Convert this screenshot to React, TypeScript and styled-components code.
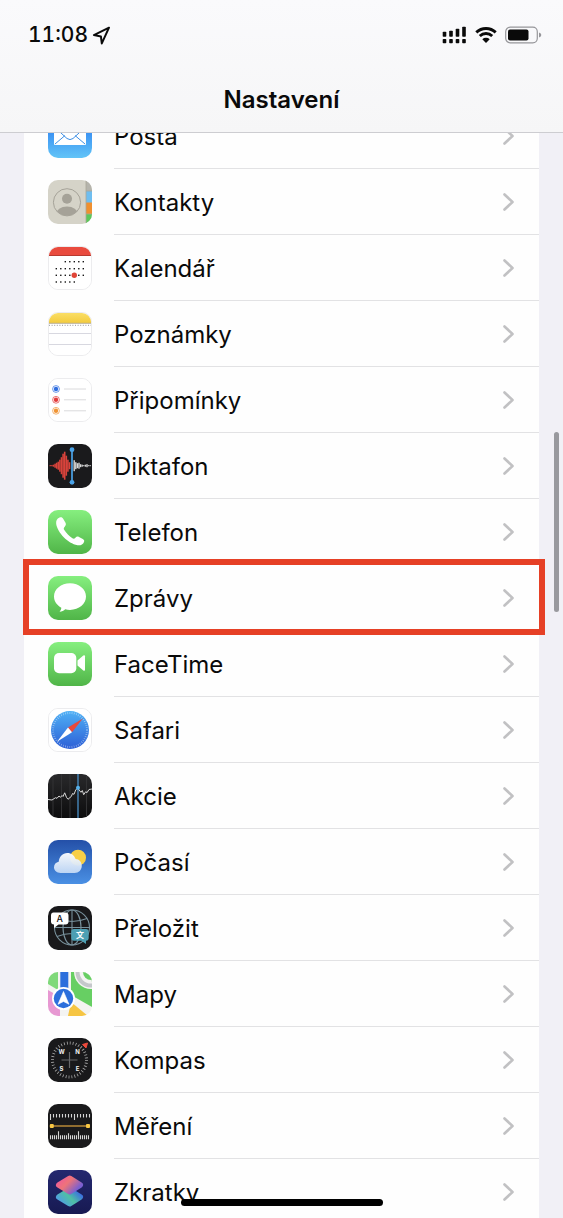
import React from "react";
import styled, { createGlobalStyle } from "styled-components";

const GlobalStyle = createGlobalStyle`
  * { box-sizing: border-box; }
  body {
    margin: 0;
    background: #f1f0f6;
    color: #0a0a0a;
    font-family: Inter, "Liberation Sans", sans-serif;
    -webkit-font-smoothing: antialiased;
  }
`;

const Screen = styled.div`
  position: relative;
  display: flex;
  flex-direction: column;
  height: 100vh;
  overflow: hidden;
`;

const Header = styled.header`
  flex: none;
  border-bottom: 1px solid #cdcdd1;
  background: linear-gradient(#fafafc, #f6f6f7);
`;

const StatusBar = styled.div`
  display: flex;
  align-items: center;
  height: 68px;
  padding: 2px 21px 0 28px;
`;

const Clock = styled.time`
  margin-right: 4px;
  font-size: 21px;
  line-height: 28px;
  font-weight: 500;
  font-variant-numeric: tabular-nums;
`;

const Indicators = styled.div`
  display: flex;
  align-items: center;
  gap: 8px;
  margin-left: auto;
`;

const Title = styled.h1`
  margin: 0;
  height: 64px;
  font-size: 24px;
  line-height: 64px;
  font-weight: 600;
  text-align: center;
`;

const Scroller = styled.main`
  flex: 1;
  min-height: 0;
  overflow: hidden;
  padding: 0 24px;
`;

const List = styled.ul`
  list-style: none;
  margin: -30px 0 0;
  padding: 0;
  background: #fefefe;
`;

const Item = styled.li`
  position: relative;
`;

const Row = styled.a`
  display: flex;
  align-items: center;
  gap: 22px;
  height: 66px;
  padding-left: 24px;
  color: inherit;
  text-decoration: none;
`;

const AppIcon = styled.span<{ $outlined?: boolean }>`
  flex: none;
  display: block;
  width: 44px;
  height: 44px;
  border: ${(p) => (p.$outlined ? "1px solid #ececee" : "none")};
  border-radius: 10px;
  overflow: hidden;
  svg {
    display: block;
    margin: ${(p) => (p.$outlined ? "-1px" : "0")};
  }
`;

const RowBody = styled.span`
  flex: 1;
  display: flex;
  align-items: center;
  justify-content: space-between;
  height: 66px;
  padding-right: 24px;
  border-bottom: 1px solid #e2e2e4;
`;

const Label = styled.span`
  padding-top: 2px;
  font-size: 24px;
  line-height: 32px;
`;

const Highlight = styled.span`
  position: absolute;
  inset: -6px -6px -4px -1px;
  z-index: 1;
  border: 6px solid #e64026;
  pointer-events: none;
`;

const ScrollThumb = styled.div`
  position: absolute;
  top: 432px;
  right: 4px;
  width: 5px;
  height: 180px;
  border-radius: 3px;
  background: #99999e;
`;

const HomeIndicator = styled.div`
  position: absolute;
  bottom: 12px;
  left: 50%;
  width: 202px;
  height: 7px;
  border-radius: 4px;
  background: #000;
  transform: translateX(-50%);
`;

const Art = ({ children }: { children: React.ReactNode }) => (
  <svg width="44" height="44" viewBox="0 0 44 44" aria-hidden="true">{children}</svg>
);

const Gradient = ({ id, from, to }: { id: string; from: string; to: string }) => (
  <linearGradient id={id} x1="0" y1="0" x2="0" y2="1">
    <stop offset="0" stopColor={from} />
    <stop offset="1" stopColor={to} />
  </linearGradient>
);

const Mail = () => (
  <Art>
    <Gradient id="mail" from="#1f6ff0" to="#62c4f7" />
    <rect width="44" height="44" fill="url(#mail)" />
    <rect x="6" y="12" width="32" height="19" rx="1" fill="#fff" />
    <path d="M7 13.500 19 24.500q3 2.200 6 0L37 13.500M7 30l10-8.500M37 30 27 21.500" fill="none" stroke="#3f8fe4" strokeWidth="1" />
  </Art>
);

const Contacts = () => (
  <Art>
    <rect width="44" height="44" fill="#d5d3c8" />
    <path d="M38 0h6v11h-6z" fill="#b5b4ac" />
    <path d="M38 11h6v11.500h-6z" fill="#6fbef0" />
    <path d="M38 22.500h6v11.500h-6z" fill="#f0902f" />
    <path d="M38 34h6v10h-6z" fill="#5cc85a" />
    <path d="M38 0v44M38 11h6M38 22.500h6M38 34h6" stroke="#aaa698" strokeWidth=".8" />
    <clipPath id="person"><circle cx="19" cy="22.300" r="13.500" /></clipPath>
    <g clipPath="url(#person)" fill="#a5a298">
      <circle cx="19" cy="18.700" r="5" />
      <ellipse cx="19" cy="34" rx="11" ry="7.500" />
    </g>
    <circle cx="19" cy="22.300" r="13.600" fill="none" stroke="#a5a298" strokeWidth="1" />
  </Art>
);

const dotColumns = [8.3, 12.8, 17.3, 21.8, 26.3, 30.8, 35.3];
const dotRows = [
  { y: 15.7, from: 2, to: 6 },
  { y: 22.7, from: 0, to: 6 },
  { y: 29.3, from: 0, to: 6 },
  { y: 36, from: 0, to: 4 },
];

const Calendar = () => (
  <Art>
    <rect width="44" height="44" fill="#fff" />
    <rect width="44" height="9.500" fill="#e94b3e" />
    <path d="M0 9.500h44" stroke="#b83a30" strokeWidth="1" />
    {dotRows.map((row) =>
      dotColumns.slice(row.from, row.to + 1).map((x) => (
        <rect key={`${x}-${row.y}`} x={x - 0.7} y={row.y - 0.7} width="1.4" height="1.4" fill="#151515" />
      ))
    )}
    <circle cx="26.300" cy="29.300" r="2.700" fill="#e04538" />
  </Art>
);

const Notes = () => (
  <Art>
    <Gradient id="notes" from="#fbe06a" to="#f3cb3d" />
    <rect width="44" height="44" fill="#fff" />
    <rect width="44" height="11" fill="url(#notes)" />
    <path d="M0 11.300h44" stroke="#b9ad8c" strokeWidth="1" />
    <path d="M1 13.300h43" stroke="#aaa" strokeWidth="1.200" strokeDasharray="1 1.600" />
    <path d="M0 21.500h44M0 32.500h44" stroke="#d8d8e0" strokeWidth="1" />
  </Art>
);

const Reminders = () => (
  <Art>
    <rect width="44" height="44" fill="#fff" />
    {[["#2f6ee0", 11], ["#e23b3b", 21.8], ["#f09435", 32.8]].map(([color, y]) => (
      <g key={y}>
        <circle cx="8" cy={y} r="3.400" fill="none" stroke={color as string} strokeWidth="1" opacity=".7" />
        <circle cx="8" cy={y} r="2.200" fill={color as string} />
        <path d={`M16 ${y}h22`} stroke="#dadadc" strokeWidth="1" />
      </g>
    ))}
  </Art>
);

const redBars = [1, 1, 2, 4, 6, 8, 12, 17, 24, 28, 20, 12, 7];
const whiteBars = [11, 7, 5, 6, 3, 2, 1, 2, 3, 1, 1];

const VoiceMemos = () => (
  <Art>
    <rect width="44" height="44" fill="#1a1a1c" />
    {redBars.map((h, i) => (
      <rect key={i} x={1.500 + i * 1.600} y={21.700 - h / 2} width="1.600" height={h} fill="#d8433b" />
    ))}
    {whiteBars.map((h, i) => (
      <rect key={i} x={25.500 + i * 1.600} y={21.700 - h / 2} width="1.400" height={h} fill="#d8d8d8" />
    ))}
    <path d="M24 5.500v33" stroke="#4aa3e8" strokeWidth="1.700" />
    <circle cx="24" cy="5.700" r="2.400" fill="#4aa3e8" />
    <circle cx="24" cy="38.300" r="2.400" fill="#4aa3e8" />
  </Art>
);

const GreenTile = ({ id }: { id: string }) => (
  <>
    <Gradient id={id} from="#86ef7f" to="#50b548" />
    <rect width="44" height="44" fill={`url(#${id})`} />
  </>
);

const Phone = () => (
  <Art>
    <GreenTile id="phone" />
    <path
      d="M11.500 7.500C13.300 6.800 14.400 7.300 15.300 8.900L17.500 12.800C18.200 14.300 17.900 15.500 16.900 16.400C15.600 17.600 15.500 18.700 16.300 20C18.300 23.200 21.200 26.200 24.400 28.300C25.600 29.100 26.500 28.800 27.400 27.700C28.400 26.500 29.600 26.200 31 26.900L34.800 29C36.200 29.800 36.500 30.800 36 31.900C35 34.500 32.400 35.700 29.500 35.200C20 33.500 9.600 22.700 8.200 14C7.800 11 8.900 8.500 11.500 7.500Z"
      fill="#fff"
    />
  </Art>
);

const Messages = () => (
  <Art>
    <GreenTile id="messages" />
    <path d="M22 7.300c9 0 16 5.900 16 13.300s-7 13.300-16 13.300c-1.700 0-3.300-.2-4.800-.6-1.400 1.400-3.300 2.300-5.700 2.400 1.200-1.200 1.800-2.400 1.800-3.900C8.900 29.400 6 25.300 6 20.600 6 13.200 13 7.300 22 7.300Z" fill="#fff" />
  </Art>
);

const FaceTime = () => (
  <Art>
    <GreenTile id="facetime" />
    <rect x="6" y="11" width="22.300" height="20.300" rx="5" fill="#fff" />
    <path d="M29.500 18.500 35.300 13.500q1.700-1 1.700.8v13.400q0 1.800-1.700.8L29.500 23.500Z" fill="#fff" />
  </Art>
);

const Safari = () => (
  <Art>
    <Gradient id="safari" from="#4fb0f5" to="#2d5fd6" />
    <rect width="44" height="44" fill="#fff" />
    <circle cx="22" cy="22" r="19" fill="url(#safari)" />
    <circle cx="22" cy="22" r="17" fill="none" stroke="#fff" strokeWidth="2" strokeDasharray=".6 1.600" opacity=".55" />
    <path d="M34.800 10.500 20 19.500 24 24.300Z" fill="#e8483c" />
    <path d="M9 33.700 20 19.500 24 24.300Z" fill="#fff" />
  </Art>
);

const Stocks = () => (
  <Art>
    <Gradient id="stocks" from="#29292b" to="#0c0c0d" />
    <rect width="44" height="44" fill="url(#stocks)" />
    <path d="M5 0v44M13.500 0v44M22 0v44M38.500 0v44" stroke="#323234" strokeWidth="1" />
    <path d="M30 0v44" stroke="#4a90c8" strokeWidth="1.300" />
    <path
      d="M0 25.500 4 26 7.500 23.700 9 24.300 11 22 12.500 23.300 14 21.500 15 22.500 16.700 18.800 18.500 23.300 20 25.300 22 23.500 23.300 22.500 24.500 19.500 26 20.300 27.700 16 30 13.700 31 16 33 18.300 34.300 16.500 35.700 20.700 37.700 17.700 39 18.700 41 15.500 44 15"
      fill="none"
      stroke="#d8d8d8"
      strokeWidth="1"
    />
    <circle cx="30" cy="13.700" r="2" fill="#55b2ee" />
  </Art>
);

const Weather = () => (
  <Art>
    <Gradient id="weather" from="#2450a8" to="#4a90e4" />
    <Gradient id="cloud" from="#fff" to="#c3d9f5" />
    <rect width="44" height="44" fill="url(#weather)" />
    <circle cx="30" cy="17.700" r="8" fill="#f8cf46" />
    <path d="M12.500 33C8.800 33 6 30.500 6 27.300c0-2.900 2-5 4.700-5.500C11.200 16.500 14.600 13 19.300 13c4 0 7 2.300 8.300 6 3.600.1 6.200 3 6.200 6.800 0 4.100-3 7.200-7.200 7.200Z" fill="url(#cloud)" opacity=".95" />
  </Art>
);

const Translate = () => (
  <Art>
    <rect width="44" height="44" fill="#19191b" />
    <g fill="none" stroke="#77909b" strokeWidth="1.100">
      <circle cx="24" cy="21.500" r="17.500" />
      <ellipse cx="24" cy="21.500" rx="9" ry="17.500" />
      <path d="M24 4v35M6.500 21.500h35M9 12.500q15 6 30 0M9 30.500q15-6 30 0" />
    </g>
    <path d="M5.500 6.500h12q3 0 3 3v6q0 3-3 3h-7L6 22v-3.500q-3 0-3-3v-6q0-3 2.500-3Z" fill="#fff" />
    <path d="M26 23h12q2.700 0 2.700 2.700v6.300q0 2.500-2.700 2.700v3.300L33.500 34.700H26q-2.700 0-2.700-2.700v-6.300Q23.300 23 26 23Z" fill="#4d9fb3" />
    <text x="11.600" y="16" fontSize="9" fontWeight="500" textAnchor="middle" fill="#111">A</text>
    <text x="32" y="32" fontSize="8" fontWeight="700" textAnchor="middle" fill="#fff" fontFamily="'Noto Sans CJK SC', sans-serif">文</text>
  </Art>
);

const Maps = () => (
  <Art>
    <rect width="44" height="44" fill="#f4f4f2" />
    <path d="M0 0h10v18L0 12Z" fill="#7fd97a" />
    <path d="M23 0h21v35L23 23Z" fill="#67cf63" />
    <circle cx="43" cy="0" r="17" fill="#f4f4f2" />
    <circle cx="43" cy="0" r="13.500" fill="none" stroke="#c5c8cb" strokeWidth="4" />
    <circle cx="43" cy="0" r="8" fill="#67cf63" />
    <path d="M0 18 12 25v19H0Z" fill="#e798d2" />
    <path d="M23 30 40 44H20Z" fill="#f6c543" />
    <rect x="12.300" width="8" height="20" fill="#2c6fdc" />
    <circle cx="15.500" cy="26.500" r="11.500" fill="#fff" />
    <circle cx="15.500" cy="26.500" r="9.700" fill="#2c6fdc" />
    <path d="M15.500 19.500 21 32.300 15.500 29.500 10 32.300Z" fill="#fff" strokeLinejoin="round" stroke="#fff" strokeWidth=".6" />
  </Art>
);

const Compass = () => (
  <Art>
    <rect width="44" height="44" fill="#19191b" />
    <circle cx="21.500" cy="22" r="17" fill="none" stroke="#aaa" strokeWidth="3" strokeDasharray=".8 2.160" />
    <path d="M21.500 14v16M13.500 22h16" stroke="#68686a" strokeWidth="1.200" />
    <path d="m34.500 6.500 5-1.500-1.500 5Z" fill="#ec4a3c" stroke="#ec4a3c" strokeLinejoin="round" />
    <g fill="#f2f2f2" fontSize="6" fontWeight="700" textAnchor="middle">
      <text x="13.500" y="16">W</text>
      <text x="29.500" y="16">N</text>
      <text x="13.500" y="32.500">S</text>
      <text x="29.500" y="32.500">E</text>
    </g>
  </Art>
);

const Measure = () => (
  <Art>
    <rect width="44" height="44" fill="#19191b" />
    <g stroke="#d5d5d5" strokeWidth="1.100">
      {Array.from({ length: 14 }, (_, i) => (
        <path key={i} d={`M${2.5 + i * 3} 10v${i % 8 === 0 ? 6 : 3.500}`} />
      ))}
      {Array.from({ length: 20 }, (_, i) => (
        <path key={i} d={`M${2.5 + i * 2} 35.300v${i === 4 || i === 14 ? -8 : i === 9 ? -6 : -4}`} />
      ))}
    </g>
    <path d="M4 22h36" stroke="#b98a39" strokeWidth="1.700" />
    <rect x="1.800" y="20" width="4" height="4" rx="1" fill="#f8c744" />
    <rect x="38" y="20" width="4" height="4" rx="1" fill="#f8c744" />
  </Art>
);

const Shortcuts = () => (
  <Art>
    <Gradient id="shortcuts" from="#24286f" to="#171a52" />
    <linearGradient id="upper" x1="0" y1="0" x2="1" y2=".6">
      <stop offset="0" stopColor="#ee5b9b" />
      <stop offset=".45" stopColor="#ee7478" />
      <stop offset="1" stopColor="#7a5fd0" />
    </linearGradient>
    <linearGradient id="lower" x1="0" y1=".8" x2="1" y2=".2">
      <stop offset="0" stopColor="#4f9fe0" />
      <stop offset=".5" stopColor="#4fc0a4" />
      <stop offset="1" stopColor="#3b6fe0" />
    </linearGradient>
    <rect width="44" height="44" fill="url(#shortcuts)" />
    <g strokeWidth="6" strokeLinejoin="round">
      <path d="M21.700 20.500 32 27 21.700 33.500 11 27Z" fill="url(#lower)" stroke="url(#lower)" />
      <path d="M21.700 8.500 32 15 21.700 21.500 11 15Z" fill="url(#upper)" stroke="url(#upper)" />
    </g>
  </Art>
);

const LocationArrow = () => (
  <svg width="19" height="19" viewBox="0 0 19 19" role="img" aria-label="Poloha">
    <path d="M17 1.700 1.900 9.100l7 1.300.9 7Z" fill="none" stroke="#0a0a0a" strokeWidth="2" strokeLinejoin="round" />
  </svg>
);

const Signal = () => (
  <svg width="25" height="18" viewBox="0 0 25 18" role="img" aria-label="Signál">
    {[5, 6, 8, 10].map((h, i) => (
      <g key={h} fill="#0a0a0a">
        <rect x={0.700 + i * 6.500} y={10.700 - h} width="3.600" height={h} rx=".8" />
        <rect x={0.700 + i * 6.500} y="13" width="3.600" height="4.300" rx=".8" />
      </g>
    ))}
  </svg>
);

const Wifi = () => (
  <svg width="22" height="18" viewBox="0 0 22 18" role="img" aria-label="Wi-Fi">
    <path d="M1.300 6.400a14 14 0 0 1 19.400 0M4.800 10a9 9 0 0 1 12.400 0" fill="none" stroke="#0a0a0a" strokeWidth="2.900" />
    <path d="M7.300 13.200a5.400 5.400 0 0 1 7.400 0L11 17Z" fill="#0a0a0a" />
  </svg>
);

const Battery = () => (
  <svg width="37" height="18" viewBox="0 0 37 18" role="img" aria-label="Baterie">
    <rect x=".7" y="1.200" width="31.600" height="15.600" rx="4.500" fill="none" stroke="#96969a" strokeWidth="1.200" />
    <rect x="3" y="3.500" width="20.500" height="11" rx="2" fill="#0a0a0a" />
    <path d="M34 6.500q2.300.8 2.300 2.500T34 11.500Z" fill="#96969a" />
  </svg>
);

const Chevron = () => (
  <svg width="13" height="20" viewBox="0 0 13 20" aria-hidden="true">
    <path d="m2.500 2.500 8 7.500-8 7.500" fill="none" stroke="#c1c1c3" strokeWidth="2.600" strokeLinecap="round" strokeLinejoin="round" />
  </svg>
);

interface Entry {
  name: string;
  Icon: React.ComponentType;
  outlined?: boolean;
  highlighted?: boolean;
}

const entries: Entry[] = [
  { name: "Pošta", Icon: Mail },
  { name: "Kontakty", Icon: Contacts },
  { name: "Kalendář", Icon: Calendar, outlined: true },
  { name: "Poznámky", Icon: Notes, outlined: true },
  { name: "Připomínky", Icon: Reminders, outlined: true },
  { name: "Diktafon", Icon: VoiceMemos },
  { name: "Telefon", Icon: Phone },
  { name: "Zprávy", Icon: Messages, highlighted: true },
  { name: "FaceTime", Icon: FaceTime },
  { name: "Safari", Icon: Safari, outlined: true },
  { name: "Akcie", Icon: Stocks },
  { name: "Počasí", Icon: Weather },
  { name: "Přeložit", Icon: Translate },
  { name: "Mapy", Icon: Maps },
  { name: "Kompas", Icon: Compass },
  { name: "Měření", Icon: Measure },
  { name: "Zkratky", Icon: Shortcuts },
];

export default function App() {
  return (
    <>
      <GlobalStyle />
      <Screen>
        <Header>
          <StatusBar>
            <Clock>11:08</Clock>
            <LocationArrow />
            <Indicators>
              <Signal />
              <Wifi />
              <Battery />
            </Indicators>
          </StatusBar>
          <Title>Nastavení</Title>
        </Header>
        <Scroller>
          <List>
            {entries.map(({ name, Icon, outlined, highlighted }) => (
              <Item key={name}>
                <Row href="#">
                  <AppIcon $outlined={outlined}><Icon /></AppIcon>
                  <RowBody>
                    <Label>{name}</Label>
                    <Chevron />
                  </RowBody>
                </Row>
                {highlighted && <Highlight />}
              </Item>
            ))}
          </List>
        </Scroller>
        <ScrollThumb />
        <HomeIndicator />
      </Screen>
    </>
  );
}
